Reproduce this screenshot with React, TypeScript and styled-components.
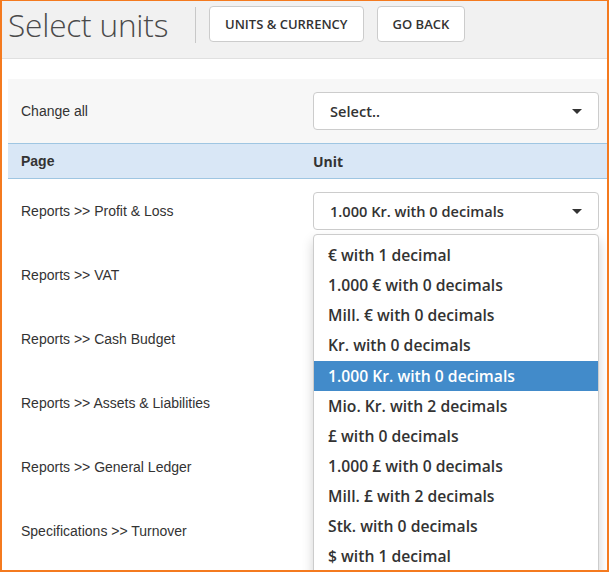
import React from "react";
import styled, { createGlobalStyle } from "styled-components";

const Global = createGlobalStyle`
  html, body { margin: 0; padding: 0; background: #fff; }
  * { box-sizing: border-box; }
`;

const Frame = styled.div`
  width: 609px;
  height: 572px;
  border-style: solid;
  border-color: #f47a1f;
  border-width: 1px 2px 2px 2px;
  overflow: hidden;
  background: #fff;
  display: flex;
  flex-direction: column;
`;

const Header = styled.header`
  height: 58px;
  flex: none;
  background: #f1f1f1;
  border-bottom: 1px solid #e0e0e0;
  display: flex;
  align-items: flex-start;
  padding: 5px 0 0 6px;
`;

const Title = styled.h1`
  margin: 0;
  font-family: "Open Sans", sans-serif;
  font-weight: 300;
  font-size: 31.6px;
  line-height: 40px;
  color: #4a4a4a;
  width: 188px;
  border-right: 1px solid #c8c8c8;
  height: 36px;
  margin-top: 1px;
  display: flex;
  align-items: center;
  letter-spacing: -0.2px;
`;

const Buttons = styled.div`
  display: flex;
  gap: 13px;
  margin-left: 13px;
`;

const Button = styled.button`
  height: 36px;
  padding: 0 15px;
  background: #fff;
  border: 1px solid #ccc;
  border-radius: 4px;
  font-family: "Open Sans", sans-serif;
  font-weight: 600;
  font-size: 13px;
  color: #333;
  text-transform: uppercase;
  cursor: pointer;
`;

const Main = styled.main`
  padding: 20px 0 0 6px;
  flex: 1;
`;

const Table = styled.div`
  display: grid;
  grid-template-columns: 292px 1fr;
`;

const ChangeRow = styled.div`
  grid-column: 1 / -1;
  display: grid;
  grid-template-columns: 292px 1fr;
  background: #f7f7f7;
  height: 64px;
  align-items: center;
`;

const HeadRow = styled.div`
  grid-column: 1 / -1;
  display: grid;
  grid-template-columns: 292px 1fr;
  background: #d9e7f6;
  border-top: 1px solid #9fc6e2;
  border-bottom: 1px solid #9fc6e2;
  height: 36px;
  align-items: center;
`;

const Row = styled.div`
  grid-column: 1 / -1;
  display: grid;
  grid-template-columns: 292px 1fr;
  height: 64px;
  align-items: center;
  position: relative;
`;

const PageCell = styled.div<{ $bold?: boolean }>`
  padding-left: 13px;
  font-family: "Liberation Sans", Arial, sans-serif;
  font-size: 14px;
  font-weight: ${(p) => (p.$bold ? 700 : 400)};
  color: #333;
`;

const UnitCell = styled.div<{ $bold?: boolean }>`
  padding-left: 13px;
  padding-right: 7px;
  font-family: "Open Sans", sans-serif;
  font-size: 14px;
  font-weight: ${(p) => (p.$bold ? 700 : 400)};
  color: #333;
  position: relative;
`;

const Select = styled.div`
  width: 286px;
  height: 38px;
  border: 1px solid #ccc;
  border-radius: 4px;
  background: #fff;
  display: flex;
  align-items: center;
  justify-content: space-between;
  padding: 0 16px 0 16px;
  font-family: "Open Sans", sans-serif;
  font-size: 14.6px;
  font-weight: 600;
  color: #333;
`;

const Caret = styled.span`
  width: 0;
  height: 0;
  border-left: 5px solid transparent;
  border-right: 5px solid transparent;
  border-top: 5px solid #333;
`;

const Menu = styled.ul`
  position: absolute;
  left: 13px;
  top: 42px;
  width: 286px;
  margin: 0;
  padding: 5px 0 4px;
  list-style: none;
  background: #fff;
  border: 1px solid #ccc;
  border-radius: 4px;
  box-shadow: 0 6px 12px rgba(0, 0, 0, 0.175);
  z-index: 10;
`;

const Item = styled.li<{ $active?: boolean }>`
  height: 30.15px;
  display: flex;
  align-items: center;
  padding-left: 14px;
  font-family: "Open Sans", sans-serif;
  font-size: 15.7px;
  font-weight: 600;
  color: ${(p) => (p.$active ? "#fff" : "#333")};
  background: ${(p) => (p.$active ? "#428bca" : "transparent")};
  white-space: nowrap;
`;

const pages = [
  "Reports >> Profit & Loss",
  "Reports >> VAT",
  "Reports >> Cash Budget",
  "Reports >> Assets & Liabilities",
  "Reports >> General Ledger",
  "Specifications >> Turnover",
];

const options = [
  "€ with 1 decimal",
  "1.000 € with 0 decimals",
  "Mill. € with 0 decimals",
  "Kr. with 0 decimals",
  "1.000 Kr. with 0 decimals",
  "Mio. Kr. with 2 decimals",
  "£ with 0 decimals",
  "1.000 £ with 0 decimals",
  "Mill. £ with 2 decimals",
  "Stk. with 0 decimals",
  "$ with 1 decimal",
];

export default function App() {
  return (
    <>
      <Global />
      <Frame>
        <Header>
          <Title>Select units</Title>
          <Buttons>
            <Button>Units &amp; Currency</Button>
            <Button>Go back</Button>
          </Buttons>
        </Header>
        <Main>
          <Table>
            <ChangeRow>
              <PageCell>Change all</PageCell>
              <UnitCell>
                <Select>
                  <span>Select..</span>
                  <Caret />
                </Select>
              </UnitCell>
            </ChangeRow>
            <HeadRow>
              <PageCell $bold>Page</PageCell>
              <UnitCell $bold>Unit</UnitCell>
            </HeadRow>
            {pages.map((p, i) => (
              <Row key={p}>
                <PageCell>{p}</PageCell>
                <UnitCell>
                  <Select>
                    <span>1.000 Kr. with 0 decimals</span>
                    <Caret />
                  </Select>
                  {i === 0 && (
                    <Menu>
                      {options.map((o) => (
                        <Item key={o} $active={o === "1.000 Kr. with 0 decimals"}>
                          {o}
                        </Item>
                      ))}
                    </Menu>
                  )}
                </UnitCell>
              </Row>
            ))}
          </Table>
        </Main>
      </Frame>
    </>
  );
}
